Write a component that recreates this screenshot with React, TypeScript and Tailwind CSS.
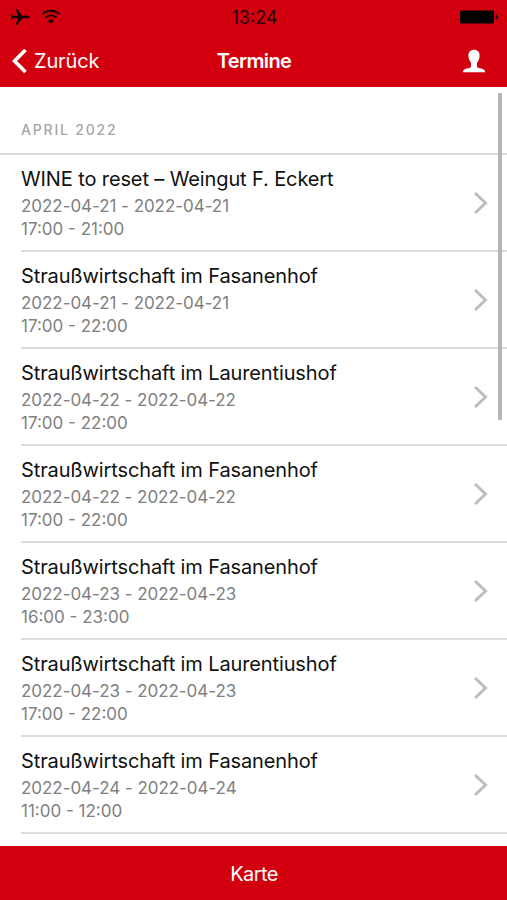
type Appointment = {
  title: string;
  date: string;
  time: string;
};

const appointments: Appointment[] = [
  {
    title: "WINE to reset – Weingut F. Eckert",
    date: "2022-04-21",
    time: "17:00 - 21:00",
  },
  {
    title: "Straußwirtschaft im Fasanenhof",
    date: "2022-04-21",
    time: "17:00 - 22:00",
  },
  {
    title: "Straußwirtschaft im Laurentiushof",
    date: "2022-04-22",
    time: "17:00 - 22:00",
  },
  {
    title: "Straußwirtschaft im Fasanenhof",
    date: "2022-04-22",
    time: "17:00 - 22:00",
  },
  {
    title: "Straußwirtschaft im Fasanenhof",
    date: "2022-04-23",
    time: "16:00 - 23:00",
  },
  {
    title: "Straußwirtschaft im Laurentiushof",
    date: "2022-04-23",
    time: "17:00 - 22:00",
  },
  {
    title: "Straußwirtschaft im Fasanenhof",
    date: "2022-04-24",
    time: "11:00 - 12:00",
  },
];

const PlaneIcon = () => (
  <svg width="20" height="18" viewBox="0 0 20 18" fill="#100002">
    <path d="M19.700 9c0 .8-1 1.200-2.200 1.200h-5.200L7.300 17H5.800l2-6.800-4.300-.3-1.800 2.300H.9L1.700 9 .9 5.800h.8l1.800 2.300 4.300-.3L5.800 1h1.500l5 6.800h5.200c1.200 0 2.200.4 2.200 1.200z" />
  </svg>
);

const WifiIcon = () => (
  <svg
    width="20"
    height="16"
    viewBox="0 0 20 16"
    fill="none"
    stroke="#100002"
    strokeWidth="1.900"
  >
    <path d="M1.500 5.200a12.200 12.200 0 0 1 17 0" />
    <path d="M4.500 8.600a7.900 7.900 0 0 1 11 0" />
    <path
      d="M10 14.800 7.200 11.800a4 4 0 0 1 5.600 0z"
      fill="#100002"
      stroke="none"
    />
  </svg>
);

const BatteryIcon = () => (
  <svg width="40" height="16" viewBox="0 0 40 16">
    <rect x="1" y="1.500" width="34" height="13" rx="1.500" fill="black" />
    <path d="M36.800 5.200c1.400.5 2 1.500 2 2.800s-.6 2.300-2 2.800z" fill="black" />
  </svg>
);

const UserIcon = () => (
  <svg width="24" height="24" viewBox="0 0 24 24" fill="white">
    <path d="M12 .8c3.500 0 5.600 2.200 5.600 5.600 0 2.600-.8 4.700-1.900 6.100-.5.700-.7 1.500-.7 2.500v2c0 1 .5 1.600 1.500 1.900l3.500.9c2 .6 3 1.700 3.200 3.500H.8c.2-1.800 1.200-2.900 3.200-3.500l3.500-.9c1-.3 1.500-.9 1.500-1.900v-2c0-1-.2-1.800-.7-2.500-1.100-1.400-1.900-3.500-1.900-6.100C6.400 3 8.500.8 12 .8z" />
  </svg>
);

const Header = () => (
  <header className="flex h-[87px] shrink-0 flex-col bg-[#d2000f]">
    <div className="grid h-[34px] shrink-0 grid-cols-3 items-center pr-2 pl-[10px]">
      <div className="flex items-center gap-[11px]">
        <PlaneIcon />
        <WifiIcon />
      </div>
      <span className="pt-px text-center text-[18px] leading-5 text-[#26000a]">
        13:24
      </span>
      <div className="flex justify-end">
        <BatteryIcon />
      </div>
    </div>
    <nav className="grid h-[53px] shrink-0 grid-cols-3 items-center pt-px pr-[21px] pl-3 text-white">
      <button className="flex items-center gap-[6px] text-[20px] tracking-[-0.15px]">
        <svg width="16" height="26" viewBox="0 0 16 26" fill="none">
          <path d="M13.500 2 2.500 13l11 11" stroke="white" strokeWidth="3.600" />
        </svg>
        Zurück
      </button>
      <h1 className="pl-[10px] text-center text-[20px] font-semibold tracking-[-0.65px]">
        Termine
      </h1>
      <button className="flex justify-end" aria-label="Profil">
        <UserIcon />
      </button>
    </nav>
  </header>
);

const AppointmentRow = ({ appointment }: { appointment: Appointment }) => (
  <li className="ml-[21px] flex h-[97px] items-center justify-between border-b-2 border-[#dcdcdd] pr-[19px]">
    <div className="pt-[3px]">
      <h2 className="mb-1 text-[20px] leading-6 tracking-[-0.12px] text-[#111111]">
        {appointment.title}
      </h2>
      <p className="text-[17px] leading-[23px] tracking-[-0.05px] text-[#808080]">
        {appointment.date} - {appointment.date}
      </p>
      <p className="text-[17px] leading-[23px] text-[#808080]">
        {appointment.time}
      </p>
    </div>
    <svg width="15" height="24" viewBox="0 0 15 24" fill="none">
      <path d="M2 2l10.500 10L2 22" stroke="#bdbdbf" strokeWidth="3" />
    </svg>
  </li>
);

export default function App() {
  return (
    <div className="flex h-[900px] w-[507px] flex-col overflow-hidden bg-white font-['Inter',sans-serif]">
      <Header />
      <main className="relative flex-1 overflow-hidden">
        <h2 className="flex h-[68px] items-end border-b-2 border-[#dcdcdd] pb-[13px] pl-[21px] text-[14px] leading-5 font-medium tracking-[1.8px] text-[#a5a5a5]">
          APRIL 2022
        </h2>
        <ul>
          {appointments.map((appointment, index) => (
            <AppointmentRow key={index} appointment={appointment} />
          ))}
        </ul>
        <div className="absolute top-[6px] right-[5px] h-[327px] w-[4px] rounded-[1px] bg-[#b5b5b6]" />
      </main>
      <footer className="flex h-[54px] shrink-0 items-center justify-center bg-[#d2000f] pt-px pl-px text-[20px] tracking-[-0.6px] text-white">
        Karte
      </footer>
    </div>
  );
}
